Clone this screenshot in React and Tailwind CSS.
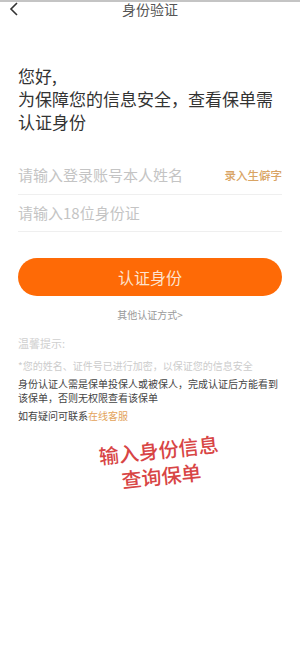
import React from 'react';

const font = { fontFamily: '"Noto Sans CJK SC", "Noto Sans", sans-serif' };

const BackIcon = () => (
  <svg width="10" height="14" viewBox="0 0 10 14" fill="none">
    <polyline points="8,1 2,7 8,13" stroke="#333" strokeWidth="1.6" strokeLinejoin="miter" />
  </svg>
);

export default function App() {
  return (
    <div className="relative w-[300px] h-[647px] bg-white overflow-hidden" style={font}>
      {/* top bar */}
      <div className="h-[2px] bg-[#c4c4c4]" />
      <div className="relative flex items-center justify-center h-[16px]">
        <div className="absolute left-[9px] top-[0px]">
          <BackIcon />
        </div>
        <span className="text-[14px] leading-[16px] text-[#555] -mt-[3px]">身份验证</span>
      </div>

      {/* greeting */}
      <div className="px-[18px] pt-[46px] text-[17px] leading-[23px] text-[#333]">
        <p>您好,</p>
        <p>为保障您的信息安全，查看保单需</p>
        <p>认证身份</p>
      </div>

      {/* inputs */}
      <div className="mx-[18px] mt-[24px]">
        <div className="flex items-center justify-between h-[38px] border-b border-[#efefef]">
          <span className="text-[15px] text-[#c4c4c4]">请输入登录账号本人姓名</span>
          <span className="text-[11.5px] text-[#d9a464] font-medium">录入生僻字</span>
        </div>
        <div className="flex items-center h-[37px] border-b border-[#efefef]">
          <span className="text-[15px] text-[#c4c4c4]">请输入18位身份证</span>
        </div>
      </div>

      {/* button */}
      <div className="mx-[18px] mt-[26px]">
        <div className="h-[38px] rounded-full bg-[#fe6a06] flex items-center justify-center">
          <span className="text-[16px] text-[#fde3cf]">认证身份</span>
        </div>
      </div>
      <p className="mt-[12px] text-center text-[10px] leading-[14px] text-[#9a9a9a]">其他认证方式&gt;</p>

      {/* tips */}
      <div className="px-[18px] mt-[14px]">
        <p className="text-[11px] leading-[14px] text-[#cfcfcf]">温馨提示:</p>
        <p className="mt-[9px] text-[10px] leading-[14px] text-[#cccccc]">*您的姓名、证件号已进行加密，以保证您的信息安全</p>
        <p className="mt-[4px] text-[10px] leading-[14px] text-[#444]">身份认证人需是保单投保人或被保人，完成认证后方能看到该保单，否则无权限查看该保单</p>
        <p className="mt-[4px] text-[10px] leading-[14px] text-[#444]">
          如有疑问可联系<span className="text-[#e3a35a]">在线客服</span>
        </p>
      </div>

      {/* annotation overlay */}
      <div className="absolute left-[92px] top-[437px] w-[136px] -rotate-[6deg] text-center text-[20px] leading-[26px] font-medium text-[#d84545]">
        <p>输入身份信息</p>
        <p>查询保单</p>
      </div>
    </div>
  );
}
